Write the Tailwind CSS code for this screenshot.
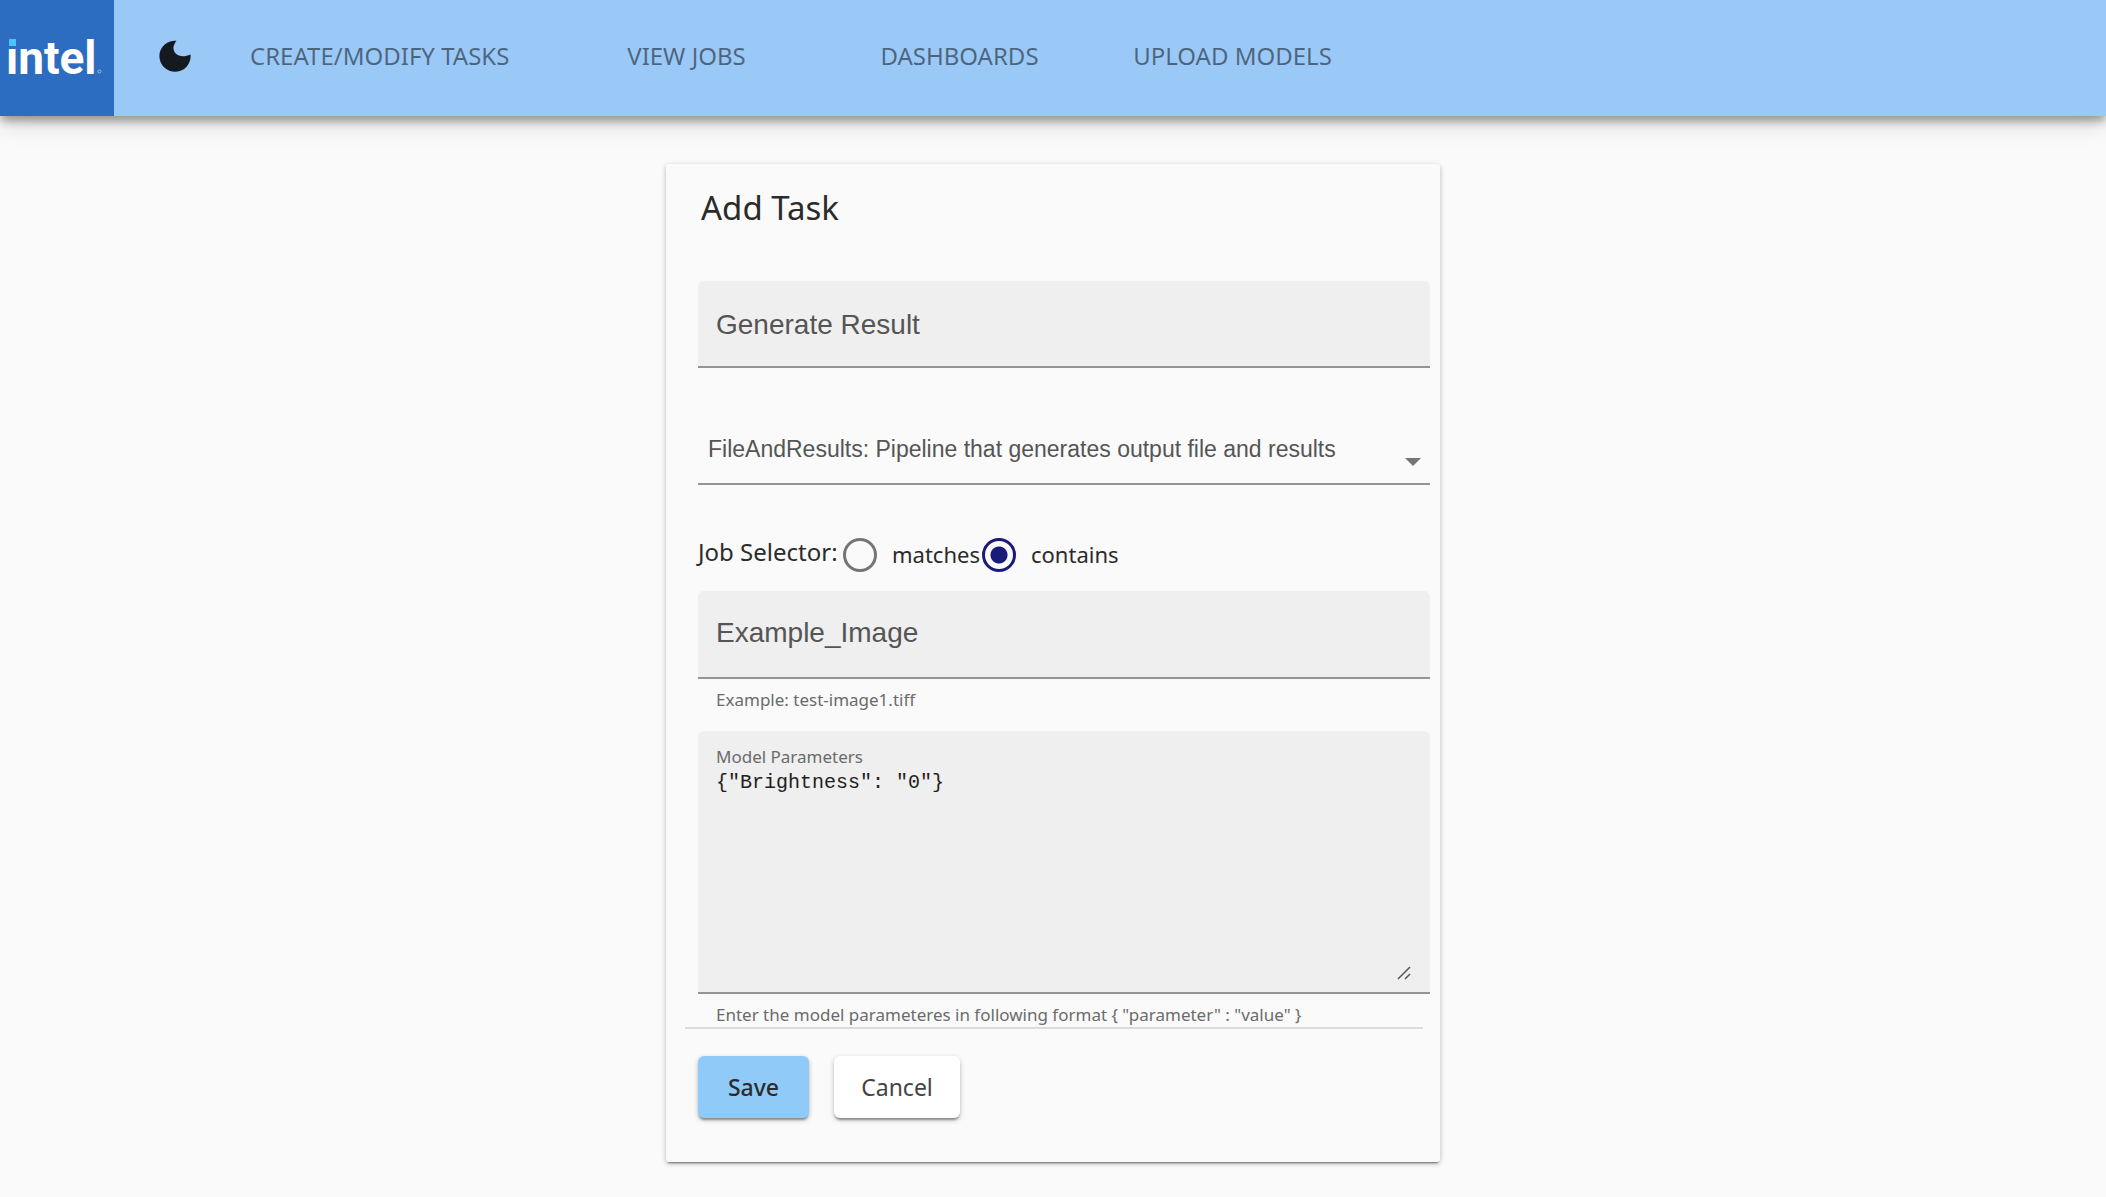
<!DOCTYPE html>
<html lang="en">
<head>
<meta charset="utf-8">
<meta name="viewport" content="width=device-width, initial-scale=1">
<title>Add Task</title>
<script src="https://cdn.jsdelivr.net/npm/@tailwindcss/browser@4"></script>
</head>
<body class="min-h-screen bg-[#fafafa] font-['Noto_Sans',sans-serif] text-[#2b2b2b]">
  <header class="flex min-h-[116px] items-stretch bg-[#9ac9f8] shadow-[0_6px_8px_-1px_rgba(0,0,0,0.3),0_4px_24px_rgba(0,0,0,0.22)]">
    <a href="#" aria-label="intel home" class="flex w-[114px] shrink-0 items-center bg-[#2c6dc2] pl-[6px]">
      <span class="relative font-['Roboto',sans-serif] text-[46px] font-bold leading-[56px] text-white">intel<span class="absolute left-[2px] top-[7px] h-[11px] w-[10px] bg-[#2c6dc2]"></span><span class="absolute left-[3px] top-[9px] size-[7px] bg-[#4ac4fb]"></span></span>
      <svg class="mt-[26px] size-[5px]" viewBox="0 0 6 6" fill="none" stroke="#a9c6ea"><circle cx="3" cy="3" r="1.8"/></svg>
    </a>
    <button type="button" aria-label="Toggle dark mode" class="ml-[44px] flex items-center pb-1">
      <svg class="size-[34px]" viewBox="0 0 34 34" fill="#141a20"><path d="M18.500 1.700A12 12 0 0 0 15.500 7.500C14.500 14 21.500 20.500 32.500 15.500A15.600 15.600 0 1 1 18.500 1.700Z"/></svg>
    </button>
    <nav class="ml-[38px] flex flex-wrap items-center pb-1 text-[24px] leading-8 text-black/50">
      <a href="#" class="w-[320px] pl-[20px]">CREATE/MODIFY TASKS</a>
      <a href="#" class="w-[273px] text-center">VIEW JOBS</a>
      <a href="#" class="w-[273px] text-center">DASHBOARDS</a>
      <a href="#" class="w-[273px] text-center">UPLOAD MODELS</a>
    </nav>
  </header>

  <main class="pt-12">
    <form class="mx-auto max-w-[774px] rounded-[3px] pb-11 pl-8 pr-[10px] pt-6 shadow-[0_3px_2px_-2px_rgba(0,0,0,0.45),0_2px_4px_rgba(0,0,0,0.16),0_1px_6px_rgba(0,0,0,0.12)]">
      <h1 class="pl-[3px] text-[33px] leading-[40px]">Add Task</h1>

      <div class="mt-[53px] border-b-2 border-[#949494]">
        <input type="text" aria-label="Task name" value="Generate Result" class="block h-[85px] w-full rounded-t-[6px] bg-[#efefef] px-[18px] pt-[2px] font-['Liberation_Sans',sans-serif] text-[28px] text-[#555] outline-none">
      </div>

      <div class="relative mt-[49px] border-b-2 border-[#949494] pb-[2px]">
        <select aria-label="Pipeline" class="block h-[64px] w-full appearance-none bg-transparent pl-[10px] pr-12 font-['Liberation_Sans',sans-serif] text-[23px] text-[#555] outline-none">
          <option>FileAndResults: Pipeline that generates output file and results</option>
        </select>
        <svg class="pointer-events-none absolute bottom-[17px] right-[9px] h-[8px] w-[16px]" viewBox="0 0 16 8" fill="#757575"><path d="M0 0H16L8 8Z"/></svg>
      </div>

      <div role="radiogroup" aria-labelledby="selector" class="mt-[34px] flex h-[72px] items-center text-[22px]">
        <span id="selector" class="w-[145px] pb-[6px] text-[24px]">Job Selector:</span>
        <label class="flex w-[139px] items-center gap-[15px]"><input type="radio" name="selector" value="matches" class="size-[34px] shrink-0 appearance-none rounded-full border-[3px] border-[#757575] checked:border-[#1a1a7a] checked:bg-[radial-gradient(circle,#1a1a7a_8px,transparent_9px)]"><span class="pb-[2px]">matches</span></label>
        <label class="flex items-center gap-[15px]"><input type="radio" name="selector" value="contains" checked class="size-[34px] shrink-0 appearance-none rounded-full border-[3px] border-[#757575] checked:border-[#1a1a7a] checked:bg-[radial-gradient(circle,#1a1a7a_8px,transparent_9px)]"><span class="pb-[2px]">contains</span></label>
      </div>

      <div class="border-b-2 border-[#949494]">
        <input type="text" aria-label="Job selector value" aria-describedby="selector-hint" value="Example_Image" class="block h-[86px] w-full rounded-t-[6px] bg-[#efefef] px-[18px] pb-[2px] font-['Liberation_Sans',sans-serif] text-[28px] text-[#555] outline-none">
      </div>
      <p id="selector-hint" class="h-[52px] pl-[18px] pt-[9px] text-[17px] leading-6 text-[#6b6b6b]">Example: test-image1.tiff</p>

      <div class="relative rounded-t-[6px] border-b-2 border-[#949494] bg-[#efefef] px-[18px] pb-[11px] pt-[14px]">
        <label for="params" class="block text-[17px] leading-6 text-[#6b6b6b]">Model Parameters</label>
        <textarea id="params" aria-describedby="params-hint" class="block h-[212px] w-full resize-none font-['Liberation_Mono',monospace] text-[20px] leading-[28px] text-[#212121] outline-none">{"Brightness": "0"}</textarea>
        <svg class="pointer-events-none absolute bottom-[12px] right-[19px] size-[14px]" viewBox="0 0 14 14" fill="none" stroke="#555" stroke-width="1.500"><path d="M1 13L13 1M8 13L13 8"/></svg>
      </div>
      <p id="params-hint" class="pl-[18px] pt-[9px] text-[17px] leading-6 text-[#6b6b6b]">Enter the model parameteres in following format { "parameter" : "value" }</p>
      <hr class="-ml-[13px] mr-[7px] border-t-2 border-[#dcdcdc]">

      <div class="mt-[27px] flex gap-[25px] text-[23px] leading-8">
        <button type="submit" class="h-[62px] w-[111px] rounded-[6px] bg-[#90caf9] font-medium shadow-[0_3px_2px_-1px_rgba(0,0,0,0.3),0_2px_5px_rgba(0,0,0,0.25)]">Save</button>
        <button type="button" class="h-[62px] w-[126px] rounded-[6px] bg-white text-[#444] shadow-[0_3px_2px_-1px_rgba(0,0,0,0.3),0_2px_5px_rgba(0,0,0,0.25)]">Cancel</button>
      </div>
    </form>
  </main>
</body>
</html>
